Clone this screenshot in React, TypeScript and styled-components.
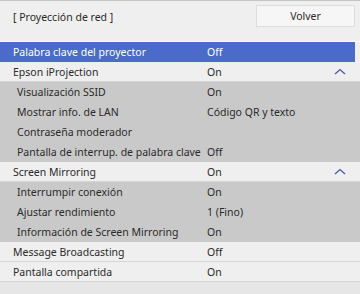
import React from "react";
import styled, { createGlobalStyle } from "styled-components";

const GlobalStyle = createGlobalStyle`
  html, body {
    margin: 0;
    padding: 0;
    background: #efefef;
  }
  body {
    font-family: "Noto Sans", "Open Sans", sans-serif;
    color: #2a2a2a;
  }
`;

type Item = {
  label: string;
  value?: string;
  sub?: boolean;
  active?: boolean;
  expanded?: boolean;
};

const items: Item[] = [
  { label: "Palabra clave del proyector", value: "Off", active: true },
  { label: "Epson iProjection", value: "On", expanded: true },
  { label: "Visualización SSID", value: "On", sub: true },
  { label: "Mostrar info. de LAN", value: "Código QR y texto", sub: true },
  { label: "Contraseña moderador", sub: true },
  { label: "Pantalla de interrup. de palabra clave", value: "Off", sub: true },
  { label: "Screen Mirroring", value: "On", expanded: true },
  { label: "Interrumpir conexión", value: "On", sub: true },
  { label: "Ajustar rendimiento", value: "1 (Fino)", sub: true },
  { label: "Información de Screen Mirroring", value: "On", sub: true },
  { label: "Message Broadcasting", value: "Off" },
  { label: "Pantalla compartida", value: "On" },
];

const ChevronUp = () => (
  <svg width="12" height="7" viewBox="0 0 12 7">
    <path d="M1 6 L6 1.5 L11 6" fill="none" stroke="#4a58a8" strokeWidth="1.3" />
  </svg>
);

const App = () => (
  <>
    <GlobalStyle />
    <Screen>
      <Header>
        <Title>[ Proyección de red ]</Title>
        <BackButton>Volver</BackButton>
      </Header>
      <List>
        {items.map((item) => (
          <Row key={item.label} $sub={item.sub} $active={item.active}>
            <Label $sub={item.sub}>{item.label}</Label>
            <Value>{item.value}</Value>
            <Toggle>{item.expanded && <ChevronUp />}</Toggle>
          </Row>
        ))}
      </List>
      <Footer />
    </Screen>
  </>
);

const Screen = styled.div`
  width: 360px;
  height: 294px;
  display: flex;
  flex-direction: column;
  background: #efefef;
  border-top: 1px solid #c4c4c4;
  box-sizing: border-box;
  overflow: hidden;
`;

const Header = styled.div`
  height: 41px;
  flex-shrink: 0;
  display: flex;
  align-items: flex-start;
  justify-content: space-between;
  padding: 4px 5px 0 13px;
  box-sizing: border-box;
  border-bottom: 1px solid #fafafa;
`;

const Title = styled.div`
  font-size: 10.5px;
  line-height: 25px;
`;

const BackButton = styled.button`
  width: 99px;
  height: 22px;
  padding: 0;
  background: #f6f6f6;
  border: 1px solid #dcdcdc;
  font-family: inherit;
  font-size: 10.5px;
  color: #2a2a2a;
`;

const List = styled.div`
  display: flex;
  flex-direction: column;
  flex-shrink: 0;
`;

const Row = styled.div<{ $sub?: boolean; $active?: boolean }>`
  height: 20px;
  display: flex;
  align-items: center;
  font-size: 10.5px;
  box-sizing: border-box;
  background: ${(p) => (p.$sub ? "#c9c9c9" : "#efefef")};
  border-bottom: 1px solid ${(p) => (p.$sub ? "#c9c9c9" : "#d6d6d6")};
  ${(p) =>
    p.$active &&
    `
    background: #4a6bc9;
    border-bottom-color: #4a6bc9;
    color: #fff;
    margin-right: 5px;
  `}
`;

const Label = styled.div<{ $sub?: boolean }>`
  width: 207px;
  padding-left: ${(p) => (p.$sub ? "17px" : "13px")};
  box-sizing: border-box;
  white-space: nowrap;
`;

const Value = styled.div`
  flex: 1;
  white-space: nowrap;
`;

const Toggle = styled.div`
  width: 40px;
  display: flex;
  justify-content: center;
  align-items: center;
`;

const Footer = styled.div`
  flex: 1;
  background: #e6e6e6;
`;

export default App;
